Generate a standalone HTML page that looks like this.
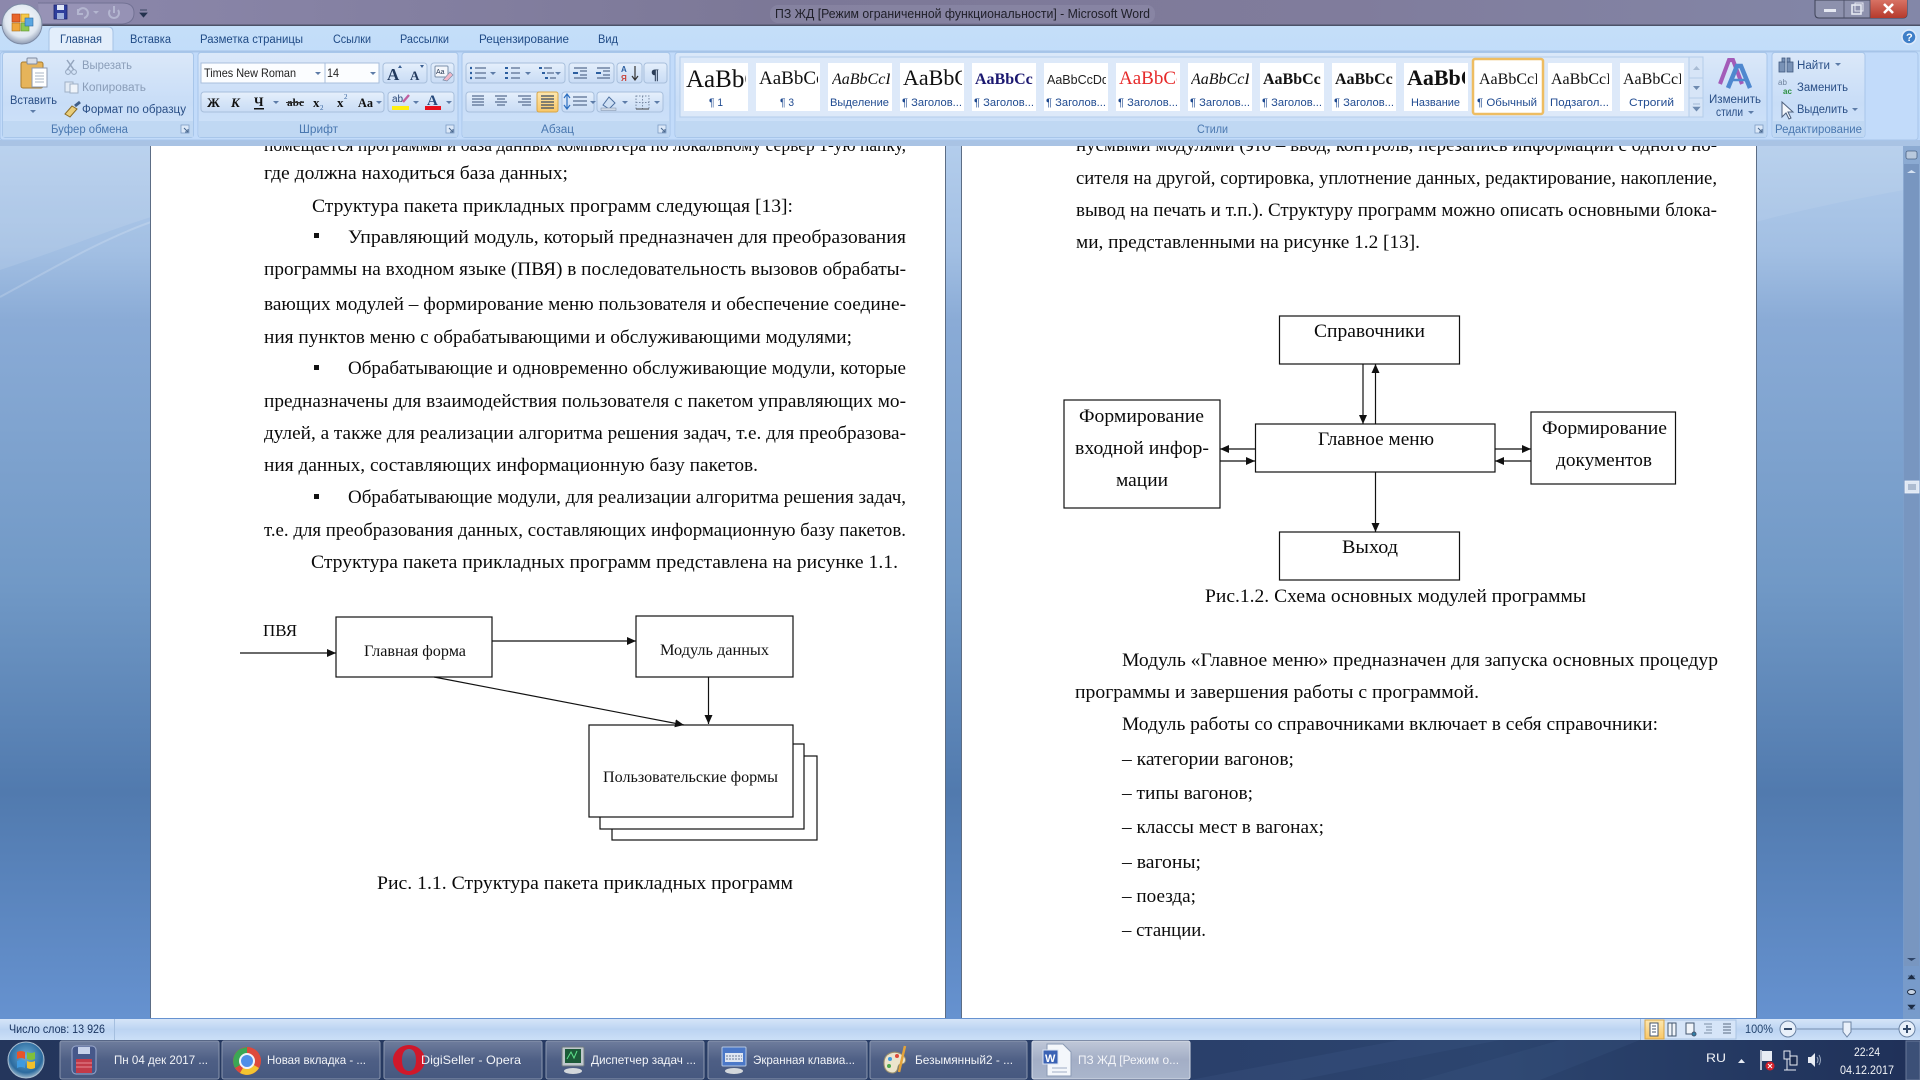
<!DOCTYPE html>
<html lang="ru"><head><meta charset="utf-8"><title>ПЗ ЖД - Microsoft Word</title>
<style>
html,body{margin:0;padding:0;width:1920px;height:1080px;overflow:hidden;background:#7a9cc8}
svg{display:block}
svg.root{filter:blur(.35px)}
text{font-family:"Liberation Sans",sans-serif;white-space:pre}
.d{font-family:"Liberation Serif",serif;font-size:18.67px;fill:#0a0a0a}
.f{font-family:"Liberation Serif",serif;font-size:15.5px;fill:#111}
.t{font-size:11.5px;fill:#1f4a85}
.r{font-size:11.5px;fill:#2a4f86}
.g{font-size:11.5px;fill:#8a9db8}
.ft{font-size:11.5px;fill:#4a78b0}
.l{font-size:11px;fill:#1f4a90}
.s{font-family:"Liberation Serif",serif;fill:#111}
.b{font-size:12px;fill:#f2f4f8}
</style></head><body>
<svg class="root" xmlns="http://www.w3.org/2000/svg" width="1920" height="1080" viewBox="0 0 1920 1080">
<defs>
<linearGradient id="bg" x1="0" y1="0" x2="0" y2="1"><stop offset="0" stop-color="#b3cdec"/><stop offset=".12" stop-color="#a2bfe3"/><stop offset=".2" stop-color="#8aabd6"/><stop offset=".5" stop-color="#7199c6"/><stop offset=".74" stop-color="#517aae"/><stop offset="1" stop-color="#6692d0"/></linearGradient>
<linearGradient id="title" x1="0" y1="0" x2="1" y2="0"><stop offset="0" stop-color="#8c88ac"/><stop offset=".4" stop-color="#7c7897"/><stop offset=".7" stop-color="#807c9c"/><stop offset="1" stop-color="#8387a8"/></linearGradient>
<linearGradient id="tabs" x1="0" y1="0" x2="0" y2="1"><stop offset="0" stop-color="#c4def9"/><stop offset="1" stop-color="#bcd8fb"/></linearGradient>
<linearGradient id="grp" x1="0" y1="0" x2="0" y2="1"><stop offset="0" stop-color="#dbe8f9"/><stop offset=".6" stop-color="#c8ddf7"/><stop offset="1" stop-color="#cfe2f9"/></linearGradient>
<linearGradient id="btn" x1="0" y1="0" x2="0" y2="1"><stop offset="0" stop-color="#e6f0fc"/><stop offset=".5" stop-color="#d6e5f8"/><stop offset="1" stop-color="#c9dcf5"/></linearGradient>
<linearGradient id="stat" x1="0" y1="0" x2="0" y2="1"><stop offset="0" stop-color="#d5e5f8"/><stop offset=".5" stop-color="#bcd4f2"/><stop offset="1" stop-color="#cbdff7"/></linearGradient>
<linearGradient id="task" x1="0" y1="0" x2="1" y2="0"><stop offset="0" stop-color="#24365c"/><stop offset=".6" stop-color="#2a3f6a"/><stop offset=".78" stop-color="#2c456f"/><stop offset="1" stop-color="#1f3058"/></linearGradient>
<linearGradient id="tb" x1="0" y1="0" x2="0" y2="1"><stop offset="0" stop-color="#6f7d9d"/><stop offset=".5" stop-color="#4e5f85"/><stop offset="1" stop-color="#46587f"/></linearGradient>
<linearGradient id="tba" x1="0" y1="0" x2="0" y2="1"><stop offset="0" stop-color="#c0c8d8"/><stop offset=".5" stop-color="#a3aec6"/><stop offset="1" stop-color="#aab6cc"/></linearGradient>
<linearGradient id="sel" x1="0" y1="0" x2="0" y2="1"><stop offset="0" stop-color="#fde7b0"/><stop offset="1" stop-color="#f9c766"/></linearGradient>
<linearGradient id="closeb" x1="0" y1="0" x2="0" y2="1"><stop offset="0" stop-color="#d87264"/><stop offset="1" stop-color="#b53a2c"/></linearGradient>
<radialGradient id="orb" cx=".5" cy=".4" r=".6"><stop offset="0" stop-color="#fbfdff"/><stop offset=".7" stop-color="#dfe7f0"/><stop offset="1" stop-color="#8f9cb4"/></radialGradient>
<radialGradient id="start" cx=".5" cy=".4" r=".6"><stop offset="0" stop-color="#6fb0d8"/><stop offset=".75" stop-color="#2b6a9e"/><stop offset="1" stop-color="#9ab8cc"/></radialGradient>
<marker id="ar" markerWidth="10" markerHeight="8" refX="9" refY="4" orient="auto" markerUnits="userSpaceOnUse"><path d="M0 0L9 4L0 8z" fill="#111"/></marker>
<g id="launch"><rect x="0" y="0" width="8" height="8" fill="#dbe8f8" stroke="#7d9cc4" stroke-width=".8"/><path d="M3 3L7 7M7 4V7H4" stroke="#48678f" fill="none"/></g>
<path id="ch" d="M0 0H6L3 3z" fill="#5d7ca8"/>
</defs>

<!-- backdrop -->
<rect x="0" y="146" width="1920" height="873" fill="url(#bg)"/>
<path d="M0 270C60 250 110 230 151 217V146H0z" fill="#fff" opacity=".1"/>
<path d="M0 297C50 270 100 240 151 222" stroke="#fff" opacity=".18" fill="none" stroke-width="2"/>
<path d="M1756 222C1800 210 1850 200 1904 190V146H1756z" fill="#fff" opacity=".08"/>

<!-- pages -->
<rect x="150" y="146" width="796" height="872" fill="#5c6d85"/>
<rect x="151" y="146" width="794" height="872" fill="#fff"/>
<rect x="961" y="146" width="796" height="872" fill="#5c6d85"/>
<rect x="962" y="146" width="794" height="872" fill="#fff"/>

<!-- page 1 text -->
<text class="d" x="264" y="151" textLength="642" lengthAdjust="spacingAndGlyphs">помещается программы и база данных компьютера по локальному сервер 1-ую папку,</text>
<text class="d" x="264" y="179" textLength="304" lengthAdjust="spacingAndGlyphs">где должна находиться база данных;</text>
<text class="d" x="312" y="212" textLength="481" lengthAdjust="spacingAndGlyphs">Структура пакета прикладных программ следующая [13]:</text>
<rect x="314" y="233" width="5" height="5" fill="#111"/>
<text class="d" x="348" y="243" textLength="558" lengthAdjust="spacingAndGlyphs">Управляющий модуль, который предназначен для преобразования</text>
<text class="d" x="264" y="275" textLength="642" lengthAdjust="spacingAndGlyphs">программы на входном языке (ПВЯ) в последовательность вызовов обрабаты-</text>
<text class="d" x="264" y="310" textLength="642" lengthAdjust="spacingAndGlyphs">вающих модулей – формирование меню пользователя и обеспечение соедине-</text>
<text class="d" x="264" y="343" textLength="588" lengthAdjust="spacingAndGlyphs">ния пунктов меню с обрабатывающими и обслуживающими модулями;</text>
<rect x="314" y="365" width="5" height="5" fill="#111"/>
<text class="d" x="348" y="374" textLength="558" lengthAdjust="spacingAndGlyphs">Обрабатывающие и одновременно обслуживающие модули, которые</text>
<text class="d" x="264" y="407" textLength="642" lengthAdjust="spacingAndGlyphs">предназначены для взаимодействия пользователя с пакетом управляющих мо-</text>
<text class="d" x="264" y="439" textLength="642" lengthAdjust="spacingAndGlyphs">дулей, а также для реализации алгоритма решения задач, т.е. для преобразова-</text>
<text class="d" x="264" y="471" textLength="494" lengthAdjust="spacingAndGlyphs">ния данных, составляющих информационную базу пакетов.</text>
<rect x="314" y="494" width="5" height="5" fill="#111"/>
<text class="d" x="348" y="503" textLength="558" lengthAdjust="spacingAndGlyphs">Обрабатывающие модули, для реализации алгоритма решения задач,</text>
<text class="d" x="264" y="536" textLength="642" lengthAdjust="spacingAndGlyphs">т.е. для преобразования данных, составляющих информационную базу пакетов.</text>
<text class="d" x="311" y="568" textLength="587" lengthAdjust="spacingAndGlyphs">Структура пакета прикладных программ представлена на рисунке 1.1.</text>

<!-- figure 1.1 -->
<g fill="none" stroke="#111" stroke-width="1.2">
<rect x="612" y="756" width="205" height="84" fill="#fff"/>
<rect x="600" y="744" width="204" height="85" fill="#fff"/>
<rect x="589" y="725" width="204" height="92" fill="#fff"/>
<rect x="336" y="617" width="156" height="60"/>
<rect x="636" y="616" width="157" height="61"/>
<path d="M240 653H336" marker-end="url(#ar)"/>
<path d="M492 641H636" marker-end="url(#ar)"/>
<path d="M434 677L684 725" marker-end="url(#ar)"/>
<path d="M708.500 677V724" marker-end="url(#ar)"/>
</g>
<text class="d" x="263" y="636" textLength="34" lengthAdjust="spacingAndGlyphs" style="font-size:17px">ПВЯ</text>
<text class="f" x="364" y="656" textLength="102" lengthAdjust="spacingAndGlyphs">Главная форма</text>
<text class="f" x="660" y="655" textLength="109" lengthAdjust="spacingAndGlyphs">Модуль данных</text>
<text class="f" x="603" y="782" textLength="175" lengthAdjust="spacingAndGlyphs">Пользовательские формы</text>
<text class="d" x="377" y="889" textLength="416" lengthAdjust="spacingAndGlyphs">Рис. 1.1. Структура пакета прикладных программ</text>

<!-- page 2 text -->
<text class="d" x="1076" y="151" textLength="641" lengthAdjust="spacingAndGlyphs">нусмыми модулями (это – ввод, контроль, перезапись информации с одного но-</text>
<text class="d" x="1076" y="184" textLength="641" lengthAdjust="spacingAndGlyphs">сителя на другой, сортировка, уплотнение данных, редактирование, накопление,</text>
<text class="d" x="1076" y="216" textLength="641" lengthAdjust="spacingAndGlyphs">вывод на печать и т.п.). Структуру программ можно описать основными блока-</text>
<text class="d" x="1076" y="248" textLength="344" lengthAdjust="spacingAndGlyphs">ми, представленными на рисунке 1.2 [13].</text>

<!-- figure 1.2 -->
<g fill="none" stroke="#111" stroke-width="1.2">
<rect x="1279.5" y="316" width="180" height="48"/>
<rect x="1064" y="400" width="156" height="108"/>
<rect x="1255.5" y="424" width="239.5" height="48"/>
<rect x="1531" y="412" width="144.5" height="72"/>
<rect x="1279.5" y="532" width="180" height="48"/>
<path d="M1363 364V424" marker-end="url(#ar)"/>
<path d="M1375.5 424V364" marker-end="url(#ar)"/>
<path d="M1255 449H1220" marker-end="url(#ar)"/>
<path d="M1220 461H1255" marker-end="url(#ar)"/>
<path d="M1495 449H1531" marker-end="url(#ar)"/>
<path d="M1531 461H1495" marker-end="url(#ar)"/>
<path d="M1375.5 472V532" marker-end="url(#ar)"/>
</g>
<text class="d" x="1314" y="337" textLength="111" lengthAdjust="spacingAndGlyphs">Справочники</text>
<text class="d" x="1079" y="422" textLength="125" lengthAdjust="spacingAndGlyphs">Формирование</text>
<text class="d" x="1075" y="454" textLength="134" lengthAdjust="spacingAndGlyphs">входной инфор-</text>
<text class="d" x="1116" y="486" textLength="52" lengthAdjust="spacingAndGlyphs">мации</text>
<text class="d" x="1318" y="445" textLength="116" lengthAdjust="spacingAndGlyphs">Главное меню</text>
<text class="d" x="1542" y="434" textLength="125" lengthAdjust="spacingAndGlyphs">Формирование</text>
<text class="d" x="1556" y="466" textLength="96" lengthAdjust="spacingAndGlyphs">документов</text>
<text class="d" x="1342" y="553" textLength="56" lengthAdjust="spacingAndGlyphs">Выход</text>
<text class="d" x="1205" y="602" textLength="381" lengthAdjust="spacingAndGlyphs">Рис.1.2. Схема основных модулей программы</text>

<text class="d" x="1122" y="666" textLength="596" lengthAdjust="spacingAndGlyphs">Модуль «Главное меню» предназначен для запуска основных процедур</text>
<text class="d" x="1075" y="698" textLength="404" lengthAdjust="spacingAndGlyphs">программы и завершения работы с программой.</text>
<text class="d" x="1122" y="730" textLength="536" lengthAdjust="spacingAndGlyphs">Модуль работы со справочниками включает в себя справочники:</text>
<text class="d" x="1122" y="765" textLength="172" lengthAdjust="spacingAndGlyphs">– категории вагонов;</text>
<text class="d" x="1122" y="799" textLength="131" lengthAdjust="spacingAndGlyphs">– типы вагонов;</text>
<text class="d" x="1122" y="833" textLength="202" lengthAdjust="spacingAndGlyphs">– классы мест в вагонах;</text>
<text class="d" x="1122" y="868" textLength="79" lengthAdjust="spacingAndGlyphs">– вагоны;</text>
<text class="d" x="1122" y="902" textLength="74" lengthAdjust="spacingAndGlyphs">– поезда;</text>
<text class="d" x="1122" y="936" textLength="84" lengthAdjust="spacingAndGlyphs">– станции.</text>

<!-- right scrollbar -->
<rect x="1903" y="146" width="17" height="873" fill="#7f9fc9" opacity=".75"/>
<rect x="1904" y="164" width="15" height="802" fill="#7896c0"/>
<path d="M1907 173H1916L1911.5 170z" fill="#d5e2f2"/>
<rect x="1906" y="143" width="11" height="2" fill="#33455f"/>
<rect x="1906" y="151" width="11" height="8" rx="2" fill="#b9c9dd" stroke="#4c6486" stroke-width=".8"/>
<rect x="1905" y="481" width="14" height="12" fill="#dfe8f4" stroke="#eef3fa" stroke-width=".8"/>
<path d="M1908 485H1916M1908 487H1916M1908 489H1916" stroke="#7b8fae"/>
<path d="M1907 958H1916L1911.5 961z" fill="#2e4568"/>
<path d="M1908 976H1915M1908 979L1911.5 975L1915 979z" fill="#1c2c45" stroke="#1c2c45" stroke-width=".6"/>
<ellipse cx="1911.5" cy="992" rx="4" ry="2.5" fill="#c8d4e4" stroke="#1c2c45"/>
<path d="M1908 1009H1915M1908 1005L1911.5 1009L1915 1005z" fill="#1c2c45" stroke="#1c2c45" stroke-width=".6"/>

<!-- title bar -->
<rect x="0" y="0" width="1920" height="25" fill="url(#title)"/>
<rect x="0" y="24.5" width="1920" height="1.5" fill="#4c5268"/>
<rect x="770" y="5" width="385" height="18" rx="8" fill="#a9a8c2" opacity=".22"/>
<text x="775" y="18" textLength="375" lengthAdjust="spacingAndGlyphs" style="font-size:12.5px;fill:#20202a">ПЗ ЖД [Режим ограниченной функциональности] - Microsoft Word</text>
<path d="M38 3H122Q134 3 134 13Q134 23 122 24H40" fill="#a29ec0" opacity=".55" stroke="#5f6283"/>
<rect x="54" y="5" width="13" height="14" fill="#2f3f9c" stroke="#1c2670" stroke-width=".8"/><rect x="57" y="5" width="7" height="5" fill="#dfe6f6"/><rect x="57" y="13" width="7" height="6" fill="#9fb0dc"/>
<path d="M78 14A5 5 0 1 1 84 18M78 9V14H83" stroke="#b4b6d0" stroke-width="2" fill="none"/>
<path d="M93 11L99 11L96 14z" fill="#b4b6d0"/>
<path d="M110 10A5 5 0 1 0 118 10M114 6V13" stroke="#b4b6d0" stroke-width="2" fill="none"/>
<path d="M140 10H147M140 13H147L143.5 17z" fill="#24324f" stroke="#24324f" stroke-width=".8"/>
<!-- window buttons -->
<path d="M1815 0H1907V14Q1907 18 1903 18H1819Q1815 18 1815 14z" fill="#8d91ad" stroke="#3e4258"/>
<path d="M1870 0H1907V14Q1907 18 1903 18H1870z" fill="url(#closeb)"/>
<path d="M1844 0V18M1870 0V18" stroke="#4a4e66" stroke-width=".8"/>
<rect x="1824" y="9" width="12" height="3" fill="#e6e9f2"/>
<rect x="1852" y="5" width="9" height="9" fill="none" stroke="#e6e9f2" stroke-width="1.6"/><rect x="1855" y="3" width="8" height="8" fill="none" stroke="#e6e9f2" stroke-width="1"/>
<path d="M1884 4L1893 13M1893 4L1884 13" stroke="#fff" stroke-width="2.6"/>

<!-- tabs + ribbon -->
<rect x="0" y="26" width="1920" height="120" fill="url(#tabs)"/>
<rect x="0" y="140" width="1920" height="6" fill="#a9c3e4"/>
<path d="M0 51H1920" stroke="#a5c2e6"/>
<rect x="0" y="52" width="1918" height="88" rx="3" fill="#c2dbfa" stroke="#a8c5ea"/>
<path d="M49 51V32Q49 27 54 27H108Q113 27 113 32V51z" fill="#e3eefb" stroke="#a6c2e4"/>
<text class="t" x="60" y="43" textLength="42" lengthAdjust="spacingAndGlyphs">Главная</text>
<text class="t" x="130" y="43" textLength="41" lengthAdjust="spacingAndGlyphs">Вставка</text>
<text class="t" x="200" y="43" textLength="103" lengthAdjust="spacingAndGlyphs">Разметка страницы</text>
<text class="t" x="333" y="43" textLength="38" lengthAdjust="spacingAndGlyphs">Ссылки</text>
<text class="t" x="400" y="43" textLength="49" lengthAdjust="spacingAndGlyphs">Рассылки</text>
<text class="t" x="479" y="43" textLength="90" lengthAdjust="spacingAndGlyphs">Рецензирование</text>
<text class="t" x="598" y="43" textLength="20" lengthAdjust="spacingAndGlyphs">Вид</text>
<circle cx="1909" cy="37" r="7" fill="#3f7fc8" stroke="#dfeafa" stroke-width="1.5"/>
<text x="1906" y="41" style="font-size:11px;font-weight:bold;fill:#fff">?</text>

<!-- office orb -->
<circle cx="22" cy="24" r="20" fill="url(#orb)" stroke="#7d8ba5"/>
<rect x="12" y="14" width="8" height="8" fill="#e8652a" stroke="#a83d12" stroke-width=".6"/><rect x="21" y="14" width="8" height="8" fill="#f8c846" stroke="#b78e1e" stroke-width=".6"/><rect x="12" y="23" width="8" height="8" fill="#f0a63c" stroke="#a5701c" stroke-width=".6"/><rect x="21" y="23" width="8" height="8" fill="#8cc850" stroke="#5f9330" stroke-width=".6"/>
<rect x="25" y="18" width="8" height="8" fill="#5aa6e0" stroke="#2e6aa3" stroke-width=".6"/>

<!-- groups -->
<g stroke="#a8c6ea" stroke-width="1">
<rect x="2.5" y="52.5" width="191" height="85" rx="3" fill="url(#grp)"/>
<rect x="198" y="52.5" width="260" height="85" rx="3" fill="url(#grp)"/>
<rect x="462" y="52.5" width="208" height="85" rx="3" fill="url(#grp)"/>
<rect x="675" y="52.5" width="1092" height="85" rx="3" fill="url(#grp)"/>
<rect x="1772" y="52.5" width="93" height="85" rx="3" fill="url(#grp)"/>
</g>
<g fill="#c0d8f3">
<rect x="3" y="121" width="190" height="16"/><rect x="199" y="121" width="258" height="16"/><rect x="463" y="121" width="206" height="16"/><rect x="676" y="121" width="1090" height="16"/><rect x="1773" y="121" width="91" height="16"/>
</g>
<text class="ft" x="51" y="133" textLength="77" lengthAdjust="spacingAndGlyphs">Буфер обмена</text>
<text class="ft" x="299" y="133" textLength="39" lengthAdjust="spacingAndGlyphs">Шрифт</text>
<text class="ft" x="541" y="133" textLength="33" lengthAdjust="spacingAndGlyphs">Абзац</text>
<text class="ft" x="1197" y="133" textLength="31" lengthAdjust="spacingAndGlyphs">Стили</text>
<text class="ft" x="1775" y="133" textLength="87" lengthAdjust="spacingAndGlyphs">Редактирование</text>
<use href="#launch" x="181" y="125"/><use href="#launch" x="446" y="125"/><use href="#launch" x="658" y="125"/><use href="#launch" x="1755" y="125"/>

<!-- clipboard -->
<rect x="21" y="62" width="22" height="26" rx="2" fill="#e6b45a" stroke="#a97c2e"/>
<rect x="27" y="58" width="10" height="6" rx="1" fill="#d8dee8" stroke="#7e8aa0"/>
<rect x="32" y="68" width="15" height="19" fill="#fff" stroke="#8c9ab0"/>
<path d="M35 73H44M35 76H44M35 79H44M35 82H44" stroke="#a9b4c6"/>
<text class="r" x="10" y="104" textLength="47" lengthAdjust="spacingAndGlyphs">Вставить</text>
<use href="#ch" x="30" y="110"/>
<path d="M67 60L74 70M74 60L67 70" stroke="#94a5bd" stroke-width="1.5"/><circle cx="68" cy="72" r="2.4" fill="none" stroke="#94a5bd"/><circle cx="74" cy="72" r="2.4" fill="none" stroke="#94a5bd"/>
<text class="g" x="82" y="69" textLength="50" lengthAdjust="spacingAndGlyphs">Вырезать</text>
<rect x="65" y="82" width="8" height="10" fill="#e3ebf5" stroke="#9fb0c6"/><rect x="70" y="84" width="8" height="9" fill="#eff4fa" stroke="#9fb0c6"/>
<text class="g" x="82" y="91" textLength="64" lengthAdjust="spacingAndGlyphs">Копировать</text>
<path d="M65 114L72 106L77 109L70 117z" fill="#e9cd7a" stroke="#8b6b24"/><path d="M75 106L80 102" stroke="#3f5e88" stroke-width="3"/>
<text class="r" x="82" y="113" textLength="104" lengthAdjust="spacingAndGlyphs">Формат по образцу</text>

<!-- font row1 -->
<g stroke="#a8bfdc" fill="#eef4fc">
<rect x="201" y="63" width="124" height="20" fill="#fbfdff"/><rect x="325" y="63" width="54" height="20" fill="#fbfdff"/>
<rect x="383" y="63" width="44" height="20" rx="3" fill="url(#btn)"/>
<rect x="431" y="63" width="23" height="20" rx="3" fill="url(#btn)"/>
<rect x="201" y="92" width="183" height="20" rx="3" fill="url(#btn)"/>
<rect x="388" y="92" width="66" height="20" rx="3" fill="url(#btn)"/>
<rect x="466" y="63" width="99" height="20" rx="3" fill="url(#btn)"/>
<rect x="569" y="63" width="45" height="20" rx="3" fill="url(#btn)"/>
<rect x="617" y="63" width="25" height="20" rx="3" fill="url(#btn)"/>
<rect x="644" y="63" width="23" height="20" rx="3" fill="url(#btn)"/>
<rect x="466" y="92" width="92" height="20" rx="3" fill="url(#btn)"/>
<rect x="562" y="92" width="32" height="20" rx="3" fill="url(#btn)"/>
<rect x="597" y="92" width="66" height="20" rx="3" fill="url(#btn)"/>
</g>
<text x="204" y="77" textLength="92" lengthAdjust="spacingAndGlyphs" style="font-size:12px;fill:#222">Times New Roman</text>
<use href="#ch" x="315" y="72"/>
<text x="327" y="77" textLength="12" lengthAdjust="spacingAndGlyphs" style="font-size:12px;fill:#222">14</text>
<use href="#ch" x="370" y="72"/>
<text class="s" x="387" y="80" style="font-size:17px;font-weight:bold;fill:#223a5e">A</text>
<text class="s" x="410" y="80" style="font-size:13px;font-weight:bold;fill:#223a5e">A</text>
<path d="M398 68L400 65L402 68zM420 65L422 68L424 65z" fill="#3a5f92"/>
<rect x="435" y="66" width="13" height="11" rx="1" fill="#f3f6fb" stroke="#7a8ea8"/>
<text x="436" y="74" style="font-size:7px;fill:#2a3a55">Aa</text>
<path d="M443 80L450 72L453 75L447 81z" fill="#f2b8c8" stroke="#7a8ea8" stroke-width=".7"/>
<!-- font row2 -->
<text class="s" x="207" y="107" style="font-size:13px;font-weight:bold">Ж</text>
<text class="s" x="231" y="107" style="font-size:13px;font-weight:bold;font-style:italic">К</text>
<text class="s" x="254" y="106" style="font-size:13px;font-weight:bold">Ч</text><rect x="254" y="108" width="10" height="1.5" fill="#111"/>
<use href="#ch" x="273" y="101"/>
<text class="s" x="287" y="106" textLength="17" lengthAdjust="spacingAndGlyphs" style="font-size:11px;font-weight:bold">abc</text><path d="M286 102.5H304" stroke="#333"/>
<text class="s" x="313" y="107" style="font-size:13px;font-weight:bold">x</text><text class="s" x="320" y="110" style="font-size:7px;fill:#34619c">2</text>
<text class="s" x="337" y="107" style="font-size:13px;font-weight:bold">x</text><text class="s" x="344" y="99" style="font-size:7px;fill:#34619c">2</text>
<text class="s" x="358" y="107" textLength="15" lengthAdjust="spacingAndGlyphs" style="font-size:13px;font-weight:bold">Aa</text>
<use href="#ch" x="376" y="101"/>
<text x="392" y="102" style="font-size:10px;fill:#2b4878">ab</text>
<path d="M403 102L409 95" stroke="#c15f9f" stroke-width="2.4"/>
<rect x="392" y="106" width="17" height="4" fill="#ffef10"/>
<use href="#ch" x="413" y="101"/>
<text class="s" x="427" y="105" style="font-size:15px;font-weight:bold;fill:#26497c">A</text>
<rect x="425" y="106" width="16" height="4" fill="#e8101c"/>
<use href="#ch" x="446" y="101"/>
<!-- para row1 -->
<g stroke="#586e90" stroke-width="1.2" fill="none">
<path d="M475 68H486M475 73H486M475 78H486"/><path d="M470 68h2M470 73h2M470 78h2" stroke="#2c5fa0" stroke-width="2.2"/>
<path d="M511 68H520M511 73H520M511 78H520"/><path d="M505 68h3M505 73h3M505 78h3" stroke="#2c5fa0" stroke-width="2"/>
<path d="M544 68H552M547 73H554M550 78H556"/><path d="M539 68h3M542 73h3M545 78h3" stroke="#2c5fa0" stroke-width="2"/>
<path d="M574 68H587M580 71H587M580 75H587M574 78H587"/><path d="M578 73H573" stroke="#2c5fa0" stroke-width="2"/>
<path d="M597 68H610M603 71H610M603 75H610M597 78H610"/><path d="M596 73H601" stroke="#2c5fa0" stroke-width="2"/>
<path d="M635 66V79M632 76L635 80L638 76" stroke="#333"/>
<path d="M472 96H484M472 99H484M472 102H484M472 105H484M495 96H507M497 99H505M495 102H507M497 105H505M518 96H531M522 99H531M518 102H531M522 105H531"/>
<path d="M573 97H587M573 101H587M573 105H587"/>
<path d="M567 95V108M564 98L567 94L570 98M564 105L567 109L570 105" stroke="#2c6fc0"/>
</g>
<text x="621" y="72" style="font-size:8px;font-weight:bold;fill:#2c5fa0">A</text>
<text x="621" y="81" style="font-size:8px;font-weight:bold;fill:#c8453c">Я</text>
<text class="s" x="651" y="79" style="font-size:15px;font-weight:bold;fill:#2c3e58">¶</text>
<use href="#ch" x="490" y="72"/><use href="#ch" x="525" y="72"/><use href="#ch" x="555" y="72"/><use href="#ch" x="590" y="101"/>
<rect x="537" y="92" width="21" height="20" rx="2" fill="url(#sel)" stroke="#d8a648"/>
<path d="M541 96H554M541 99H554M541 102H554M541 105H554M541 108H554" stroke="#3a4a62" stroke-width="1.2"/>
<path d="M603 105L609 97L615 103L609 109z" fill="#cfe0f4" stroke="#4b6e9e"/><rect x="601" y="108" width="15" height="2.5" fill="#cfd9e6" stroke="#7a8ea8" stroke-width=".5"/>
<use href="#ch" x="622" y="101"/>
<rect x="636" y="96" width="13" height="13" fill="none" stroke="#7a8ca6" stroke-dasharray="1.5 1.5"/><path d="M642.5 96V109M636 102.5H649" stroke="#7a8ca6" stroke-dasharray="1.5 1.5"/><path d="M636 109H649" stroke="#444"/>
<use href="#ch" x="654" y="101"/>

<!-- styles gallery -->
<rect x="680" y="57" width="1009" height="60" fill="#dde9f9" stroke="#b4cdea"/>
<g fill="#fff">
<rect x="684" y="63" width="64" height="48"/><rect x="756" y="63" width="64" height="48"/><rect x="828" y="63" width="64" height="48"/><rect x="900" y="63" width="64" height="48"/><rect x="972" y="63" width="64" height="48"/><rect x="1044" y="63" width="64" height="48"/><rect x="1116" y="63" width="64" height="48"/><rect x="1188" y="63" width="64" height="48"/><rect x="1260" y="63" width="64" height="48"/><rect x="1332" y="63" width="64" height="48"/><rect x="1404" y="63" width="64" height="48"/>
<rect x="1548" y="63" width="64" height="48"/><rect x="1620" y="63" width="64" height="48"/>
</g>
<rect x="1473" y="59" width="70" height="55" rx="2" fill="#fff" stroke="#eebd62" stroke-width="2.5"/>
<svg x="686" y="63" width="60" height="30"><text class="s" x="0" y="24" style="font-size:25px">AaBbC</text></svg>
<svg x="758" y="63" width="60" height="30"><text class="s" x="1" y="21" style="font-size:19px">AaBbCcD</text></svg>
<svg x="832" y="63" width="58" height="30"><text class="s" x="0" y="21" style="font-size:16px;font-style:italic">AaBbCcI</text></svg>
<svg x="902" y="63" width="60" height="30"><text class="s" x="1" y="22" style="font-size:22px">AaBbC</text></svg>
<svg x="975" y="63" width="58" height="30"><text class="s" x="0" y="21" style="font-size:16px;font-weight:bold;fill:#1b1870">AaBbCcI</text></svg>
<svg x="1047" y="63" width="59" height="30"><text x="0" y="21" style="font-size:12.5px;fill:#222">AaBbCcDdE</text></svg>
<svg x="1119" y="63" width="58" height="30"><text class="s" x="0" y="21" style="font-size:19px;fill:#e62a2a">AaBbCcD</text></svg>
<svg x="1191" y="63" width="58" height="30"><text class="s" x="0" y="21" style="font-size:16px;font-style:italic">AaBbCcI</text></svg>
<svg x="1263" y="63" width="58" height="30"><text class="s" x="0" y="21" style="font-size:16px;font-weight:bold">AaBbCcI</text></svg>
<svg x="1335" y="63" width="58" height="30"><text class="s" x="0" y="21" style="font-size:16px;font-weight:bold">AaBbCcI</text></svg>
<svg x="1407" y="63" width="58" height="30"><text class="s" x="0" y="22" style="font-size:22px;font-weight:bold">AaBbC</text></svg>
<svg x="1479" y="63" width="58" height="30"><text class="s" x="0" y="21" style="font-size:16px">AaBbCcI</text></svg>
<svg x="1551" y="63" width="58" height="30"><text class="s" x="0" y="21" style="font-size:16px">AaBbCcI</text></svg>
<svg x="1623" y="63" width="58" height="30"><text class="s" x="0" y="21" style="font-size:16px">AaBbCcI</text></svg>
<text class="l" x="709" y="106" textLength="14" lengthAdjust="spacingAndGlyphs">¶ 1</text>
<text class="l" x="780" y="106" textLength="14" lengthAdjust="spacingAndGlyphs">¶ 3</text>
<text class="l" x="830" y="106" textLength="59" lengthAdjust="spacingAndGlyphs">Выделение</text>
<text class="l" x="902" y="106" textLength="60" lengthAdjust="spacingAndGlyphs">¶ Заголов...</text>
<text class="l" x="974" y="106" textLength="60" lengthAdjust="spacingAndGlyphs">¶ Заголов...</text>
<text class="l" x="1046" y="106" textLength="60" lengthAdjust="spacingAndGlyphs">¶ Заголов...</text>
<text class="l" x="1118" y="106" textLength="60" lengthAdjust="spacingAndGlyphs">¶ Заголов...</text>
<text class="l" x="1190" y="106" textLength="60" lengthAdjust="spacingAndGlyphs">¶ Заголов...</text>
<text class="l" x="1262" y="106" textLength="60" lengthAdjust="spacingAndGlyphs">¶ Заголов...</text>
<text class="l" x="1334" y="106" textLength="60" lengthAdjust="spacingAndGlyphs">¶ Заголов...</text>
<text class="l" x="1411" y="106" textLength="49" lengthAdjust="spacingAndGlyphs">Название</text>
<text class="l" x="1477" y="106" textLength="60" lengthAdjust="spacingAndGlyphs">¶ Обычный</text>
<text class="l" x="1550" y="106" textLength="59" lengthAdjust="spacingAndGlyphs">Подзагол...</text>
<text class="l" x="1629" y="106" textLength="45" lengthAdjust="spacingAndGlyphs">Строгий</text>
<g fill="#d7e5f7" stroke="#b4cdea"><rect x="1689" y="57" width="14" height="21"/><rect x="1689" y="78" width="14" height="20"/><rect x="1689" y="98" width="14" height="19"/></g>
<path d="M1693 70H1700L1696.500 66z" fill="#a9bcd4"/><path d="M1693 86H1700L1696.500 90z" fill="#6f8bb0"/><path d="M1693 104H1700M1693 107H1700L1696.500 111z" fill="#6f8bb0" stroke="#6f8bb0" stroke-width=".6"/>
<path d="M1720 84L1729 60H1733L1742 84" fill="none" stroke="#a35bb8" stroke-width="4"/>
<path d="M1728 88L1737 66H1741L1750 88" fill="none" stroke="#4f88cf" stroke-width="4.500"/>
<path d="M1732 80H1746" stroke="#4f88cf" stroke-width="2.500"/>
<text class="r" x="1709" y="103" textLength="52" lengthAdjust="spacingAndGlyphs">Изменить</text>
<text class="r" x="1716" y="116" textLength="27" lengthAdjust="spacingAndGlyphs">стили</text>
<use href="#ch" x="1748" y="111"/>

<!-- edit group -->
<g fill="#7992b6" stroke="#40597f" stroke-width=".8"><rect x="1779" y="62" width="6" height="10"/><rect x="1787" y="62" width="6" height="10"/><rect x="1782" y="58" width="3" height="4"/><rect x="1787" y="58" width="3" height="4"/></g>
<text class="r" x="1797" y="69" textLength="33" lengthAdjust="spacingAndGlyphs">Найти</text>
<use href="#ch" x="1835" y="63"/>
<text x="1778" y="85" style="font-size:8px;fill:#70849f">ab</text><text x="1783" y="94" style="font-size:8px;font-weight:bold;fill:#2c9042">ac</text>
<text class="r" x="1797" y="91" textLength="51" lengthAdjust="spacingAndGlyphs">Заменить</text>
<path d="M1782 102V117L1786 113L1789 119L1791 118L1788 112H1793z" fill="#f4f7fb" stroke="#4c5f7c"/>
<text class="r" x="1797" y="113" textLength="51" lengthAdjust="spacingAndGlyphs">Выделить</text>
<use href="#ch" x="1852" y="108"/>

<!-- status bar -->
<rect x="0" y="1019" width="1920" height="21" fill="url(#stat)"/>
<text class="t" x="9" y="1033" textLength="96" lengthAdjust="spacingAndGlyphs" style="font-size:11.5px;fill:#17325e">Число слов: 13 926</text>
<path d="M114.500 1019V1040M1640.500 1019V1040" stroke="#a5bfdf"/>
<rect x="1645" y="1020" width="91" height="19" fill="#d6e5f8" stroke="#a9c3e2"/>
<rect x="1645" y="1020" width="19" height="19" fill="url(#sel)" stroke="#d8a648"/>
<g stroke="#44566f" fill="none">
<rect x="1650" y="1023" width="8" height="13" fill="#fff"/><path d="M1652 1026H1656M1652 1029H1656M1652 1032H1656"/>
<rect x="1668" y="1023" width="8" height="13" fill="#f1f5fa"/><path d="M1672 1023V1036"/>
<rect x="1686" y="1023" width="8" height="11" fill="#f1f5fa"/><circle cx="1694" cy="1034" r="2" fill="#2f7fa8"/>
<path d="M1704 1024H1712M1706 1027H1712M1706 1030H1712M1704 1033H1712" stroke="#7c8ea6"/>
<path d="M1723 1024H1731M1723 1027H1731M1723 1030H1731M1723 1033H1731" stroke="#5a6b82"/>
</g>
<text class="t" x="1745" y="1033" textLength="28" lengthAdjust="spacingAndGlyphs" style="fill:#24456f">100%</text>
<circle cx="1788" cy="1029" r="8" fill="#e8f0fa" stroke="#6a83a4"/><path d="M1784 1029H1792" stroke="#334a6a" stroke-width="2"/>
<path d="M1797 1029H1899" stroke="#8ea6c6" stroke-width="1.500"/>
<path d="M1843 1022H1851V1032L1847 1037L1843 1032z" fill="#e9f0fa" stroke="#6c83a3"/>
<circle cx="1907" cy="1029" r="8" fill="#e8f0fa" stroke="#6a83a4"/><path d="M1903 1029H1911M1907 1025V1033" stroke="#334a6a" stroke-width="2"/>

<!-- taskbar -->
<rect x="0" y="1040" width="1920" height="40" fill="url(#task)"/>
<path d="M1190 1080L1400 1040H1500L1300 1080z" fill="#3d5684" opacity=".3"/>
<path d="M1420 1080L1560 1040H1640L1540 1080z" fill="#3d5684" opacity=".25"/>
<circle cx="26" cy="1060" r="18" fill="url(#start)" stroke="#a9bdd0"/>
<path d="M17 1052Q21 1050 25 1052V1059Q21 1057 17 1059z" fill="#e8542a"/><path d="M27 1052Q31 1054 35 1052V1059Q31 1061 27 1059z" fill="#7fbf3a"/><path d="M17 1061Q21 1059 25 1061V1068Q21 1066 17 1068z" fill="#3f9ae0"/><path d="M27 1061Q31 1063 35 1061V1068Q31 1070 27 1068z" fill="#f2c02a"/>
<g stroke="#8a96ae" fill="url(#tb)">
<rect x="60" y="1041" width="159" height="38" rx="2"/><rect x="222" y="1041" width="158" height="38" rx="2"/><rect x="384" y="1041" width="158" height="38" rx="2"/><rect x="546" y="1041" width="158" height="38" rx="2"/><rect x="708" y="1041" width="159" height="38" rx="2"/><rect x="870" y="1041" width="157" height="38" rx="2"/>
</g>
<rect x="1032" y="1041" width="158" height="38" rx="2" fill="url(#tba)" stroke="#d5dbe6"/>
<!-- app icons -->
<rect x="72" y="1046" width="24" height="28" rx="4" fill="#46588a" stroke="#9aa8cc"/><rect x="76" y="1059" width="16" height="14" fill="#c23a48"/><path d="M76 1063H92M76 1067H92" stroke="#e58a94"/><rect x="78" y="1047" width="12" height="7" fill="#c7d2ea"/>
<circle cx="247" cy="1061" r="14" fill="#dd4a3c"/><path d="M247 1061L259 1068A14 14 0 0 1 240 1073z" fill="#f4c430"/><path d="M247 1061L235 1068A14 14 0 0 1 240 1049L247 1047z" fill="#3ba755"/><path d="M247 1047A14 14 0 0 1 261 1061H247z" fill="#dd4a3c"/><circle cx="247" cy="1061" r="7" fill="#4f8fe8" stroke="#f2f4f8" stroke-width="2"/>
<path d="M409 1045C418 1045 425 1052 425 1060C425 1068 418 1075 409 1075C400 1075 393 1068 393 1060C393 1052 400 1045 409 1045zM409 1049C404 1049 402 1054 402 1060C402 1066 404 1071 409 1071C414 1071 416 1066 416 1060C416 1054 414 1049 409 1049z" fill="#d0182a" fill-rule="evenodd"/>
<rect x="562" y="1047" width="22" height="19" rx="1" fill="#c0c8cc" stroke="#6f7a80"/><rect x="565" y="1049" width="16" height="14" fill="#1c5a38"/><path d="M567 1059L571 1052L574 1058L577 1051" stroke="#5ee08a" fill="none"/><ellipse cx="573" cy="1071" rx="9" ry="3" fill="#d4d8dc"/>
<rect x="722" y="1047" width="24" height="19" rx="1" fill="#4b78c8" stroke="#b4c6e0"/><rect x="725" y="1053" width="18" height="9" fill="#dfe6f2"/><path d="M726 1056h16M726 1059h16" stroke="#6a7a96" stroke-dasharray="2 1"/><ellipse cx="734" cy="1071" rx="9" ry="3" fill="#d4d8dc"/>
<path d="M884 1063C884 1053 894 1050 901 1054C908 1058 906 1064 901 1064C896 1064 900 1072 893 1073C887 1073 884 1069 884 1063z" fill="#ece4cc" stroke="#9a8f6c"/><circle cx="890" cy="1059" r="2" fill="#3f9ae0"/><circle cx="897" cy="1056" r="2" fill="#dd4a3c"/><circle cx="889" cy="1066" r="2" fill="#4ca84a"/><path d="M899 1072L905 1046" stroke="#e3a33a" stroke-width="2.500"/>
<path d="M1047 1044H1063L1071 1052V1076H1047z" fill="#f4f7fb" stroke="#8a9ab4"/><rect x="1043" y="1050" width="15" height="14" fill="#3a62b4" stroke="#dce4f2"/><text x="1045" y="1062" style="font-size:11px;font-weight:bold;fill:#fff">W</text><path d="M1052 1068H1067M1052 1072H1067" stroke="#a0aec4"/>
<!-- labels -->
<text class="b" x="114" y="1064" textLength="94" lengthAdjust="spacingAndGlyphs">Пн 04 дек 2017 ...</text>
<text class="b" x="267" y="1064" textLength="99" lengthAdjust="spacingAndGlyphs">Новая вкладка - ...</text>
<text class="b" x="421" y="1064" textLength="100" lengthAdjust="spacingAndGlyphs">DigiSeller - Opera</text>
<text class="b" x="591" y="1064" textLength="105" lengthAdjust="spacingAndGlyphs">Диспетчер задач ...</text>
<text class="b" x="753" y="1064" textLength="102" lengthAdjust="spacingAndGlyphs">Экранная клавиа...</text>
<text class="b" x="915" y="1064" textLength="98" lengthAdjust="spacingAndGlyphs">Безымянный2 - ...</text>
<text class="b" x="1078" y="1064" textLength="101" lengthAdjust="spacingAndGlyphs">ПЗ ЖД [Режим о...</text>
<!-- tray -->
<text class="b" x="1706" y="1062" textLength="20" lengthAdjust="spacingAndGlyphs">RU</text>
<path d="M1738 1063H1745L1741.500 1059z" fill="#e8ecf4"/>
<path d="M1761 1050V1070" stroke="#e8ecf4" stroke-width="1.500"/><path d="M1762 1051H1772V1061H1762z" fill="#e8ecf4"/><circle cx="1770" cy="1066" r="4.500" fill="#d8202a"/><path d="M1768 1064L1772 1068M1772 1064L1768 1068" stroke="#fff"/>
<rect x="1784" y="1051" width="6" height="8" fill="none" stroke="#e8ecf4"/><rect x="1790" y="1056" width="7" height="9" fill="#1d2d50" stroke="#e8ecf4"/><path d="M1787 1059V1070M1784 1070H1796" stroke="#e8ecf4"/>
<path d="M1808 1057H1811L1815 1053V1067L1811 1063H1808z" fill="#e8ecf4"/><path d="M1817 1057Q1819 1060 1817 1063M1819 1055Q1822 1060 1819 1065" stroke="#9aa8c0" fill="none"/>
<text class="b" x="1854" y="1056" textLength="26" lengthAdjust="spacingAndGlyphs">22:24</text>
<text class="b" x="1840" y="1074" textLength="54" lengthAdjust="spacingAndGlyphs">04.12.2017</text>
<rect x="1906" y="1041" width="14" height="39" fill="#44587f" opacity=".8" stroke="#7b8aa8"/>
</svg>
</body></html>
